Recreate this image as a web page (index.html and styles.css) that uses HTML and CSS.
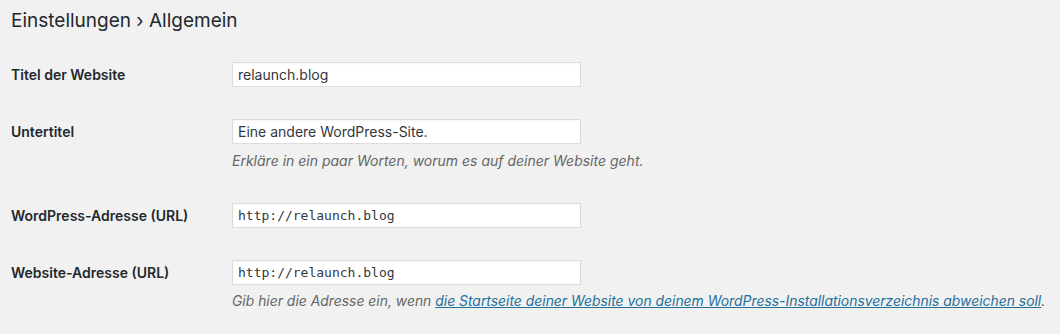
FILE: index.html
```html
<!DOCTYPE html>
<html lang="de">
<head>
    <meta charset="UTF-8">
    <meta name="viewport" content="width=device-width, initial-scale=1.0">
    <title>Einstellungen › Allgemein</title>
    <link rel="stylesheet" href="styles.css">
</head>
<body>
<div class="wrap">

    <h1 class="page-title">Einstellungen › Allgemein</h1>

    <form class="form-table">
        <div class="form-row">
            <label class="form-label" for="blogname">Titel der Website</label>
            <div class="form-field">
                <input class="regular-text" type="text" id="blogname" value="relaunch.blog">
            </div>
        </div>

        <div class="form-row">
            <label class="form-label" for="blogdescription">Untertitel</label>
            <div class="form-field">
                <input class="regular-text" type="text" id="blogdescription" value="Eine andere WordPress-Site.">
                <p class="description">Erkläre in ein paar Worten, worum es auf deiner Website geht.</p>
            </div>
        </div>

        <div class="form-row">
            <label class="form-label" for="siteurl">WordPress-Adresse (URL)</label>
            <div class="form-field">
                <input class="regular-text code" type="url" id="siteurl" value="http://relaunch.blog">
            </div>
        </div>

        <div class="form-row">
            <label class="form-label" for="home">Website-Adresse (URL)</label>
            <div class="form-field">
                <input class="regular-text code" type="url" id="home" value="http://relaunch.blog">
                <p class="description nowrap">Gib hier die Adresse ein, wenn <a href="#">die Startseite deiner Website von deinem WordPress-Installationsverzeichnis abweichen soll</a>.</p>
            </div>
        </div>
    </form>

</div>
</body>
</html>
```

FILE: styles.css
```css
body {
    font-family: Inter, "Noto Sans", sans-serif;
    background-color: #f1f1f1;
    color: #23282d;
    margin: 0;
    padding: 0;
}
.wrap {
    padding: 0 10px;
}
.page-title {
    font-size: 19px;
    font-weight: 400;
    line-height: 29px;
    margin: 0;
    padding: 6px 0 11px 1px;
}
.form-table {
    display: block;
}
.form-row {
    display: grid;
    grid-template-columns: 222px 1fr;
    padding: 16px 0 16px;
}
.form-label {
    font-size: 14px;
    font-weight: 600;
    line-height: 25px;
    padding-left: 1px;
}
.form-field {
    display: flex;
    flex-direction: column;
    align-items: flex-start;
}
.regular-text {
    box-sizing: border-box;
    width: 349px;
    height: 25px;
    margin: 0;
    padding: 0 5px;
    border: 1px solid #dcdcdc;
    background: white;
    box-shadow: inset 0 1px 2px rgba(0,0,0,0.04);
    font-family: Inter, "Noto Sans", sans-serif;
    font-size: 14px;
    color: #32373c;
    outline: none;
}
.code {
    font-family: "DejaVu Sans Mono", monospace;
    font-size: 13px;
}
.description {
    margin: 6px 0 0;
    font-size: 14px;
    line-height: 21px;
    font-style: italic;
    color: #666;
}
.nowrap {
    white-space: nowrap;
    font-size: 13.9px;
}
.description a {
    color: #1f6f9a;
}
```
